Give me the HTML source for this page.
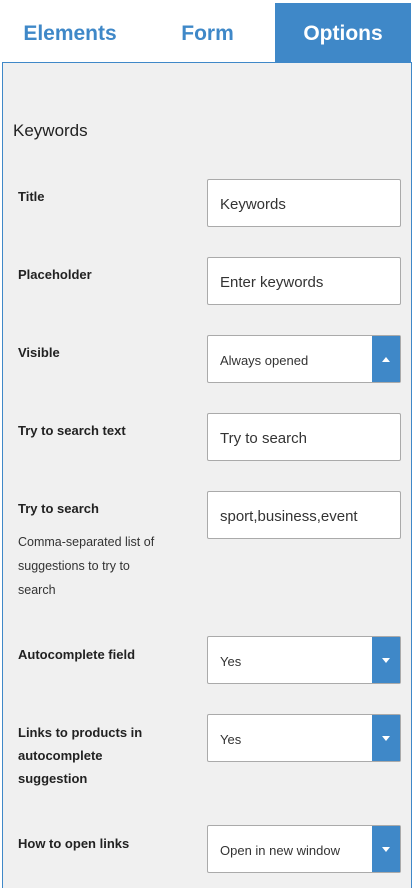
<!DOCTYPE html><html><head><style>
html,body{margin:0;width:415px;height:888px;overflow:hidden}
body{background:#fff;font-family:"Liberation Sans",sans-serif;position:relative}
.tab{position:absolute;top:3px;height:59px;line-height:62px;font-weight:bold;font-size:21px;color:#3f88c8;text-align:center}
.panel{position:absolute;left:2px;top:62px;width:408px;height:830px;background:#f0f0f0;border:1px solid #3f88c8;border-bottom:0}
.h{position:absolute;left:13px;top:121px;font-size:17px;color:#222}
.l{position:absolute;left:18px;font-size:13px;font-weight:bold;color:#222;line-height:23px;width:150px}
.d{position:absolute;left:18px;font-size:12.5px;color:#333;line-height:24px;width:150px}
.i{position:absolute;left:207px;height:46px;background:#fff;border:1px solid #aaa;border-radius:2px;font-size:15px;color:#333;line-height:49px;padding-left:12px;width:180px}
.s{font-size:13px}
.b{position:absolute;right:0;top:0;width:28px;height:46px;background:#3f88c8}
.b:after{content:"";position:absolute;left:10px;top:21px;border-left:4px solid transparent;border-right:4px solid transparent;border-top:5px solid #fff}
.b.up:after{border-top:0;border-bottom:5px solid #fff}
</style></head><body>
<div class="panel"></div>
<div class="tab" style="left:0;width:140px">Elements</div>
<div class="tab" style="left:140px;width:135px">Form</div>
<div class="tab" style="left:275px;width:136px;background:#3f88c8;color:#fff">Options</div>
<div class="h">Keywords</div>
<div class="l" style="top:185px">Title</div><div class="i" style="top:179px">Keywords</div>
<div class="l" style="top:263px">Placeholder</div><div class="i" style="top:257px">Enter keywords</div>
<div class="l" style="top:341px">Visible</div><div class="i s" style="top:335px">Always opened<div class="b up"></div></div>
<div class="l" style="top:419px">Try to search text</div><div class="i" style="top:413px">Try to search</div>
<div class="l" style="top:497px">Try to search</div><div class="i" style="top:491px">sport,business,event</div>
<div class="d" style="top:530px">Comma-separated list of suggestions to try to search</div>
<div class="l" style="top:643px">Autocomplete field</div><div class="i s" style="top:636px">Yes<div class="b"></div></div>
<div class="l" style="top:721px">Links to products in autocomplete suggestion</div><div class="i s" style="top:714px">Yes<div class="b"></div></div>
<div class="l" style="top:832px">How to open links</div><div class="i s" style="top:825px">Open in new window<div class="b"></div></div>
</body></html>
